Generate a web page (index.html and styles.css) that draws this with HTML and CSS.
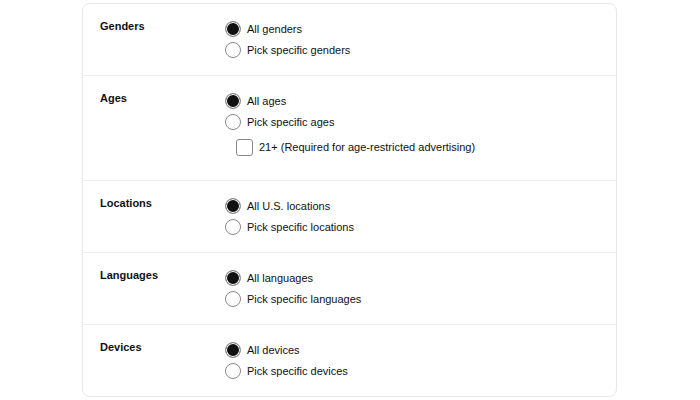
FILE: index.html
```html
<!DOCTYPE html>
<html>
<head>
<meta charset="utf-8">
<link rel="stylesheet" href="styles.css">
</head>
<body>
<div class="card">
  <section class="row">
    <div class="label">Genders</div>
    <div class="options">
      <label class="opt"><span class="radio checked"></span>All genders</label>
      <label class="opt"><span class="radio"></span>Pick specific genders</label>
    </div>
  </section>
  <section class="row">
    <div class="label">Ages</div>
    <div class="options">
      <label class="opt"><span class="radio checked"></span>All ages</label>
      <label class="opt"><span class="radio"></span>Pick specific ages</label>
      <label class="opt sub"><span class="check"></span>21+ (Required for age-restricted advertising)</label>
    </div>
  </section>
  <section class="row">
    <div class="label">Locations</div>
    <div class="options">
      <label class="opt"><span class="radio checked"></span>All U.S. locations</label>
      <label class="opt"><span class="radio"></span>Pick specific locations</label>
    </div>
  </section>
  <section class="row">
    <div class="label">Languages</div>
    <div class="options">
      <label class="opt"><span class="radio checked"></span>All languages</label>
      <label class="opt"><span class="radio"></span>Pick specific languages</label>
    </div>
  </section>
  <section class="row">
    <div class="label">Devices</div>
    <div class="options">
      <label class="opt"><span class="radio checked"></span>All devices</label>
      <label class="opt"><span class="radio"></span>Pick specific devices</label>
    </div>
  </section>
</div>
</body>
</html>
```
FILE: styles.css
```css
html, body {
  margin: 0;
  padding: 0;
  background: #fff;
}
body {
  font-family: "Liberation Sans", Arial, sans-serif;
  font-size: 11px;
  color: #111;
}
.card {
  width: 533px;
  margin: 3px auto 0 82px;
  border: 1px solid #e8e8e8;
  border-radius: 8px;
}
.row {
  display: flex;
  padding: 17px 17px 17px 17px;
  border-top: 1px solid #ededed;
  min-height: 37px;
}
.row:first-child {
  border-top: none;
}
.label {
  width: 125px;
  font-weight: 700;
  line-height: 12px;
  margin-top: -1px;
}
.options {
  display: flex;
  flex-direction: column;
  gap: 5px;
}
.opt {
  display: flex;
  align-items: center;
  gap: 6px;
  height: 16px;
  line-height: 16px;
}
.radio {
  width: 14px;
  height: 14px;
  border: 1px solid #8a8a8a;
  border-radius: 50%;
  box-sizing: content-box;
  flex: none;
}
.radio.checked {
  background: #111;
  box-shadow: inset 0 0 0 1px #fff;
  border-color: #9a9a9a;
}
.sub {
  margin-left: 11px;
  margin-top: 4px;
  margin-bottom: 8px;
  gap: 6px;
}
.check {
  width: 15px;
  height: 15px;
  border: 1px solid #8a8a8a;
  border-radius: 3px;
  flex: none;
}
```
